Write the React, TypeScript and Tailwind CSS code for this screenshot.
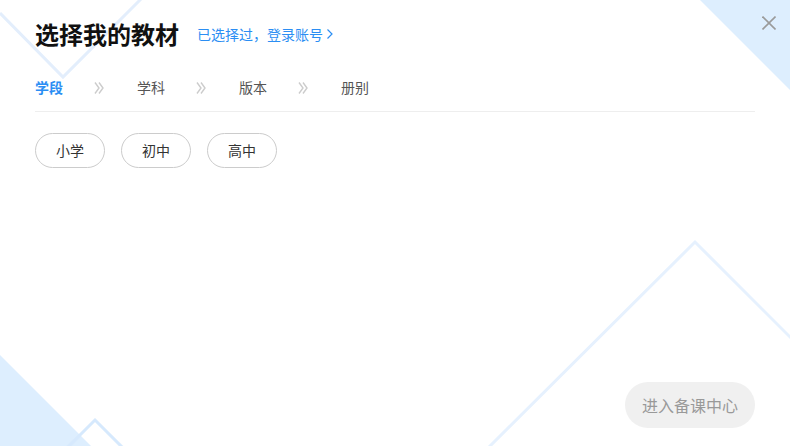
import React from 'react';

const font = { fontFamily: '"Noto Sans CJK SC", "Noto Sans", sans-serif' };

const Backdrop: React.FC = () => (
  <svg className="absolute inset-0 pointer-events-none" width="790" height="446" viewBox="0 0 790 446">
    <polyline points="0,13 63,77 141,-1" fill="none" stroke="#e3eefc" strokeWidth="3" />
    <polygon points="700,0 790,0 790,90" fill="#ddeefe" />
    <polygon points="0,355 0,446 91,446" fill="#ddeefe" />
    <polyline points="66,449 95,420 124,449" fill="none" stroke="#d6e9fd" strokeWidth="3" />
    <polyline points="489,447 695,242 795,342" fill="none" stroke="#e6f1fe" strokeWidth="3" />
  </svg>
);

const DoubleChevron: React.FC = () => (
  <svg className="w-[10px] h-[12px]" viewBox="0 0 10 12" fill="none" stroke="#cccccc" strokeWidth="1.4">
    <polyline points="1,0.5 5,6 1,11.5" />
    <polyline points="5,0.5 9,6 5,11.5" />
  </svg>
);

export default function App() {
  const steps = ['学段', '学科', '版本', '册别'];
  const stages = ['小学', '初中', '高中'];

  return (
    <div className="relative w-[790px] h-[446px] overflow-hidden bg-white" style={font}>
      <Backdrop />

      <button className="absolute top-[16px] right-[14px] w-[14px] h-[14px]">
        <svg viewBox="0 0 14 14" className="w-[14px] h-[14px]" stroke="#9a9a9a" strokeWidth="1.6">
          <line x1="0.5" y1="0.5" x2="13.5" y2="13.5" />
          <line x1="13.5" y1="0.5" x2="0.5" y2="13.5" />
        </svg>
      </button>

      <div className="relative flex flex-col h-full px-[35px]">
        <div className="flex items-center h-[68px]">
          <h1 className="text-[24px] leading-none font-bold text-[#111]">选择我的教材</h1>
          <a className="ml-[18px] flex items-center text-[14px] text-[#2b8ef3] leading-none">
            已选择过，登录账号
            <svg className="ml-[4px] w-[6px] h-[10px]" viewBox="0 0 6 10" fill="none" stroke="#2b8ef3" strokeWidth="1.2">
              <polyline points="0.5,0.5 5,5 0.5,9.5" />
            </svg>
          </a>
        </div>

        <div className="flex items-center h-[39px] mb-[4px]">
          {steps.map((s, i) => (
            <div key={s} className="flex items-center">
              <span className={i === 0 ? 'w-[28px] text-[14px] font-bold text-[#2b8ef3]' : 'w-[28px] text-[14px] text-[#555]'}>
                {s}
              </span>
              {i < steps.length - 1 && (
                <div className="ml-[31px] mr-[33px] flex items-center">
                  <DoubleChevron />
                </div>
              )}
            </div>
          ))}
        </div>
        <div className="h-px bg-[#eeeeee]" />

        <div className="flex gap-[16px] mt-[21px]">
          {stages.map((s) => (
            <button
              key={s}
              className="w-[70px] h-[35px] rounded-full border border-[#cccccc] text-[14px] text-[#333] bg-white flex items-center justify-center"
            >
              {s}
            </button>
          ))}
        </div>

        <div className="mt-auto pb-[18px] flex justify-end">
          <button className="w-[130px] h-[46px] rounded-full bg-[#f0f0f0] text-[16px] text-[#999]">
            进入备课中心
          </button>
        </div>
      </div>
    </div>
  );
}
